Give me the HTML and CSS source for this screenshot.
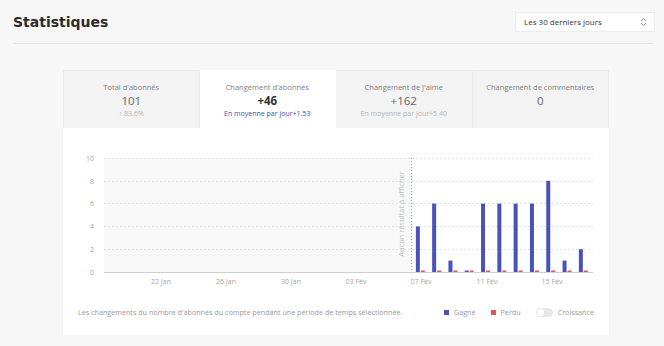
FILE: index.html
```html
<!DOCTYPE html>
<html lang="fr">
    <head>
        <meta charset="UTF-8">
        <meta name="viewport" content="width=device-width, initial-scale=1.0">
        <title>Statistiques</title>
        <link rel="stylesheet" href="styles.css">
    </head>
    <body>
        <div class="header">
            <h1>Statistiques</h1>
            <div class="select">
                <span>Les 30 derniers jours</span>
                <svg width="7" height="10" viewBox="0 0 7 10"><path d="M1 4 L3.5 1.5 L6 4 M1 6 L3.5 8.5 L6 6" fill="none" stroke="#888" stroke-width="0.9"/></svg>
            </div>
        </div>
        <div class="stats">
            <div class="tabs">
                <div class="tab">
                    <div class="tlabel">Total d'abonnés</div>
                    <div class="tvalue">101</div>
                    <div class="tsub">&#8593; 83.6%</div>
                </div>
                <div class="tab active">
                    <div class="tlabel">Changement d'abonnés</div>
                    <div class="tvalue">+46</div>
                    <div class="tsub">En moyenne par jour+1.53</div>
                </div>
                <div class="tab">
                    <div class="tlabel">Changement de J'aime</div>
                    <div class="tvalue">+162</div>
                    <div class="tsub">En moyenne par jour+5.40</div>
                </div>
                <div class="tab">
                    <div class="tlabel">Changement de commentaires</div>
                    <div class="tvalue">0</div>
                </div>
            </div>
            <div class="card">
                <svg class="chart" width="546" height="155" viewBox="0 0 546 155">
                    <rect x="41" y="18" width="307" height="114" fill="#f8f8f8"/>
                    <g stroke="#e2e2e2" stroke-width="1" stroke-dasharray="2,2">
                        <line x1="41" y1="18.5" x2="530" y2="18.5"/>
                        <line x1="41" y1="41.5" x2="530" y2="41.5"/>
                        <line x1="41" y1="63.5" x2="530" y2="63.5"/>
                        <line x1="41" y1="86.5" x2="530" y2="86.5"/>
                        <line x1="41" y1="109.5" x2="530" y2="109.5"/>
                    </g>
                    <g class="ylab" text-anchor="end">
                        <text x="31" y="21">10</text>
                        <text x="31" y="44">8</text>
                        <text x="31" y="66">6</text>
                        <text x="31" y="89">4</text>
                        <text x="31" y="112">2</text>
                        <text x="31" y="135">0</text>
                    </g>
                    <line x1="348.5" y1="18" x2="348.5" y2="132" stroke="#999" stroke-width="1" stroke-dasharray="1,2"/>
                    <text class="nodata" transform="translate(341,74) rotate(-90)" text-anchor="middle">Aucun résultat à afficher</text>
                    <g id="bars"></g>
                    <line x1="41" y1="132.5" x2="530" y2="132.5" stroke="#cfcfcf" stroke-width="1"/>
                    <g class="xlab" text-anchor="middle">
                        <text x="98" y="144">22 Jan</text>
                        <text x="163" y="144">26 Jan</text>
                        <text x="228" y="144">30 Jan</text>
                        <text x="293" y="144">03 Fév</text>
                        <text x="358" y="144">07 Fév</text>
                        <text x="424" y="144">11 Fév</text>
                        <text x="489" y="144">15 Fév</text>
                    </g>
                </svg>
                <div class="footer">
                    <div class="desc">Les changements du nombre d'abonnés du compte pendant une période de temps sélectionnée.</div>
                    <div class="legend">
                        <span class="item"><i class="sq blue"></i>Gagné</span>
                        <span class="item"><i class="sq red"></i>Perdu</span>
                        <span class="item"><i class="toggle"></i>Croissance</span>
                    </div>
                </div>
            </div>
        </div>
        <script>
            // gained per day from 07 Fév (day 19) to 17 Fév (day 29)
            const gained = [4, 6, 1, 0, 6, 6, 6, 6, 8, 1, 2]
            const ns = "http://www.w3.org/2000/svg"
            const g = document.getElementById("bars")
            gained.forEach((v, k) => {
                const c = 41 + 16.3 * (19 + k + 0.5)
                const h = Math.max(v * 11.4, 1.5)
                const b = document.createElementNS(ns, "rect")
                b.setAttribute("x", c - 6); b.setAttribute("y", 132 - h)
                b.setAttribute("width", 4); b.setAttribute("height", h)
                b.setAttribute("fill", "#4a52b8")
                g.appendChild(b)
                const r = document.createElementNS(ns, "rect")
                r.setAttribute("x", c - 1); r.setAttribute("y", 130.5)
                r.setAttribute("width", 4); r.setAttribute("height", 1.5)
                r.setAttribute("fill", "#e0555a")
                g.appendChild(r)
            })
        </script>
    </body>
</html>
```

FILE: styles.css
```css
*{
    box-sizing: border-box;
}
body{
    margin: 0;
    background-color: #f7f7f7;
    font-family: "Open Sans", "Noto Sans", sans-serif;
    color: #555;
}
.header{
    display: flex;
    justify-content: space-between;
    align-items: center;
    height: 44px;
    margin: 0 11px 0 13px;
    border-bottom: 1px solid #e6e6e6;
}
.header h1{
    margin: 0;
    font-family: "DejaVu Sans", sans-serif;
    font-size: 14px;
    font-weight: bold;
    color: #2b2b2b;
}
.select{
    display: flex;
    justify-content: space-between;
    align-items: center;
    width: 140px;
    height: 20px;
    margin-right: -2px;
    padding: 0 7px 0 8px;
    background-color: white;
    border: 1px solid #ececec;
    font-size: 8px;
    color: #333;
}
.stats{
    margin: 26px 0 0 63px;
    width: 546px;
}
.tabs{
    display: grid;
    grid-template-columns: repeat(4, 1fr);
    height: 58px;
}
.tab{
    background-color: #f3f3f3;
    border: 1px solid #ebebeb;
    border-left: none;
    border-bottom: none;
    text-align: center;
    padding-top: 11px;
}
.tab:first-child{
    border-left: 1px solid #ebebeb;
}
.tab.active{
    background-color: white;
    border-color: white;
}
.tlabel{
    font-size: 7.5px;
    color: #808080;
    line-height: 10px;
}
.tvalue{
    font-size: 11.5px;
    color: #666;
    line-height: 16px;
    margin-top: 1px;
}
.tsub{
    font-size: 7px;
    color: #b5b5b5;
    line-height: 10px;
}
.active .tvalue{
    font-weight: bold;
    color: #333;
}
.active .tsub{
    color: #4450a8;
}
.card{
    background-color: white;
    height: 207px;
    padding-top: 12px;
    box-shadow: 0 1px 3px rgba(0, 0, 0, 0.04);
}
.chart{
    display: block;
}
.chart text{
    font-family: "Open Sans", sans-serif;
    font-size: 7px;
    fill: #a5a5a5;
}
.chart .nodata{
    font-size: 7.5px;
    fill: #bdbdbd;
}
.footer{
    display: flex;
    justify-content: space-between;
    align-items: center;
    height: 24px;
    margin-top: 5px;
    padding: 0 15px 0 15px;
    font-size: 7.2px;
    color: #9a9a9a;
}
.legend{
    display: flex;
    align-items: center;
    gap: 15px;
}
.item{
    display: flex;
    align-items: center;
    gap: 5px;
}
.sq{
    width: 5px;
    height: 5px;
}
.blue{
    background-color: #4a52b8;
}
.red{
    background-color: #e0555a;
}
.toggle{
    width: 17px;
    height: 9px;
    border-radius: 5px;
    background-color: #e8e8e8;
    position: relative;
}
.toggle::after{
    content: "";
    position: absolute;
    left: 1px;
    top: 1px;
    width: 7px;
    height: 7px;
    border-radius: 50%;
    background-color: white;
}
```
